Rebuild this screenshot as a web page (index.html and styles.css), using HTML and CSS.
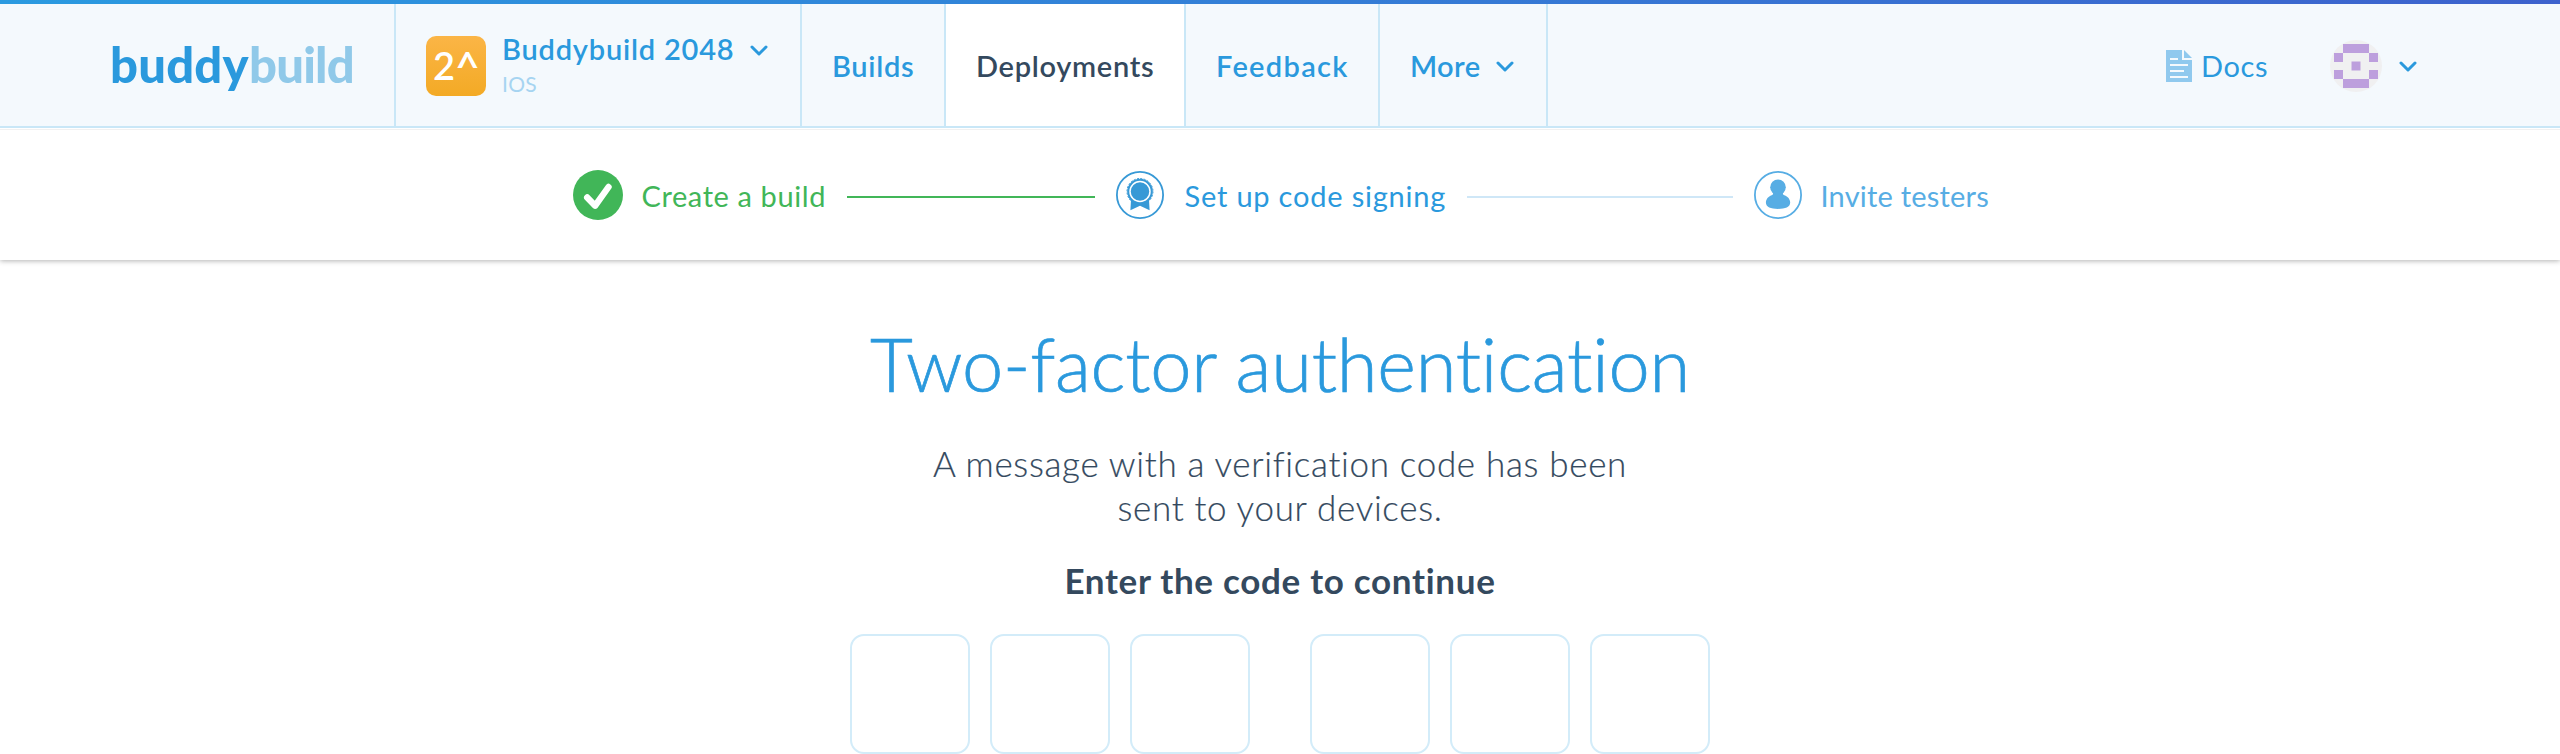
FILE: index.html
```html
<!DOCTYPE html>
<html lang="en">
<head>
<meta charset="utf-8">
<title>buddybuild</title>
<link rel="stylesheet" href="styles.css">
</head>
<body>
<header class="header">
  <a class="logo"><span class="logo-strong">buddy</span><span class="logo-light">build</span></a>
  <div class="app">
    <div class="app-icon"><span class="app-two">2</span><span class="app-caret">^</span></div>
    <div class="app-text">
      <div class="app-name">Buddybuild 2048</div>
      <div class="app-platform">IOS</div>
    </div>
    <svg class="chevron app-chevron" viewBox="0 0 18 12"><path d="M2 2l7 7 7-7"/></svg>
  </div>
  <nav class="nav">
    <a class="nav-item nav-builds">Builds</a>
    <a class="nav-item nav-deployments active">Deployments</a>
    <a class="nav-item nav-feedback">Feedback</a>
    <a class="nav-item nav-more">More<svg class="chevron more-chevron" viewBox="0 0 18 12"><path d="M2 2l7 7 7-7"/></svg></a>
  </nav>
  <div class="account">
    <svg class="docs-icon" viewBox="0 0 26 32"><path fill="#90c9ee" fill-rule="evenodd" d="M0 0h16v10h10v22H0zM4 8v2h8V8zm0 6v2h18v-2zm0 6v2h14v-2zm0 6v2h18v-2z"/><path fill="#90c9ee" d="M18 0l8 8h-8z"/></svg>
    <a class="docs">Docs</a>
    <svg class="avatar" viewBox="0 0 52 52"><circle cx="26" cy="26" r="26" fill="#f0f0f1"/><path fill="#bd9fdd" d="M13 4h26v9H13zM4 13h9v9H4zM39 13h9v9h-9zM21.5 21.5h9v9h-9zM4 30h9v9H4zM39 30h9v9h-9zM13 39h26v9H13z"/></svg>
    <svg class="chevron account-chevron" viewBox="0 0 18 12"><path d="M2 2l7 7 7-7"/></svg>
  </div>
</header>

<section class="steps">
  <svg class="step-icon step-done" viewBox="0 0 50 50"><circle cx="25" cy="25" r="25" fill="#41b658"/><path d="M14.2 27.5l8 8.2L35.5 17" fill="none" stroke="#fff" stroke-width="6.4" stroke-linecap="round" stroke-linejoin="round"/></svg>
  <span class="step-label label-create">Create a build</span>
  <span class="step-line line-done"></span>
  <svg class="step-icon" viewBox="0 0 48 48"><circle cx="24" cy="24" r="23.1" fill="#fff" stroke="#3799d6" stroke-width="1.8"/><path d="M15 29l-.6 10.200 9.600-4.400 9.600 4.400L33 29z" fill="#3799d6"/><circle cx="24" cy="20.500" r="12.800" fill="#3799d6"/><circle cx="24" cy="20.500" r="13" fill="none" stroke="#3799d6" stroke-width="1" stroke-dasharray="2 1.400"/><circle cx="24" cy="20.500" r="10" fill="none" stroke="#fff" stroke-width="1.500"/></svg>
  <span class="step-label label-signing">Set up code signing</span>
  <span class="step-line line-next"></span>
  <svg class="step-icon" viewBox="0 0 48 48"><g fill="#57ade4"><circle cx="24" cy="24" r="23.1" fill="#fff" stroke="#57ade4" stroke-width="1.8"/><circle cx="24" cy="16.300" r="7.800"/><path d="M18.500 20.500c1 2 .8 2.900-.9 3.700-3.300 1.200-5.700 4-5.700 7.400 0 4.600 4.800 6.300 12.100 6.300s12.200-1.700 12.200-6.300c0-3.400-2.400-6.200-5.800-7.400-1.700-.8-1.900-1.700-.9-3.700z"/></g></svg>
  <span class="step-label label-invite">Invite testers</span>
</section>

<main class="main">
  <h1 class="title">Two-factor authentication</h1>
  <p class="message">A message with a verification code has been<br>sent to your devices.</p>
  <p class="prompt">Enter the code to continue</p>
  <form class="code">
    <div class="code-group"><input class="digit" aria-label="Digit 1"><input class="digit" aria-label="Digit 2"><input class="digit" aria-label="Digit 3"></div>
    <div class="code-group"><input class="digit" aria-label="Digit 4"><input class="digit" aria-label="Digit 5"><input class="digit" aria-label="Digit 6"></div>
  </form>
</main>
</body>
</html>
```

FILE: styles.css
```css
* { box-sizing: border-box; }
body {
  margin: 0;
  background: #fff;
  font-family: Lato, "Liberation Sans", sans-serif;
  font-size: 29px;
  color: #34495e;
}
svg { display: block; flex: none; }

.header {
  display: flex;
  height: 128px;
  padding-top: 4px;
  background: linear-gradient(90deg, #2a9ae0, #3d62cd) top / 100% 4px no-repeat #f4f9fd;
  border-bottom: 2px solid #c9e7f7;
}
.logo {
  display: flex;
  align-items: center;
  width: 394px;
  padding: 0 0 3px 110px;
  font-size: 49px;
  font-weight: 900;
}
.logo-strong { width: 139px; color: #2a99dd; letter-spacing: 0.2px; }
.logo-light { color: #90c9e9; letter-spacing: -0.8px; }

.app {
  display: flex;
  width: 408px;
  padding: 32px 0 0 30px;
  border-left: 2px solid #c9e7f7;
  border-right: 2px solid #c9e7f7;
}
.app-icon {
  display: flex;
  width: 60px;
  height: 60px;
  padding-left: 7px;
  border-radius: 10px;
  background: linear-gradient(#fbb546, #f3aa25);
  color: #fff;
  font-size: 38px;
  font-weight: 600;
  line-height: 58px;
}
.app-caret { font-size: 43px; line-height: 62px; }
.app-text { width: 235px; margin: -5px 0 0 16px; color: #2a99dd; }
.app-name { font-weight: 600; line-height: 36px; letter-spacing: 0.8px; white-space: nowrap; }
.app-platform {
  margin: 5px 0 0;
  color: #a6d4f1;
  font-size: 21px;
  line-height: 24px;
  letter-spacing: 0.3px;
}
.chevron { width: 18px; height: 12px; fill: none; stroke: #2a99dd; stroke-width: 3; stroke-linecap: round; stroke-linejoin: round; }
.app-chevron { margin: 9px 0 0 13px; }

.nav { display: flex; }
.nav-item {
  display: flex;
  align-items: center;
  padding-left: 30px;
  border-right: 2px solid #c9e7f7;
  color: #2a99dd;
  font-weight: 600;
}
.nav-builds { width: 144px; letter-spacing: 0.7px; }
.nav-deployments { width: 240px; letter-spacing: 0.7px; }
.nav-feedback { width: 194px; letter-spacing: 1.3px; }
.nav-more { width: 168px; letter-spacing: 0.4px; }
.active { background: #fff; color: #34495e; }
.more-chevron { margin: 3px 0 0 16px; }

.account { display: flex; align-items: center; margin-left: auto; padding-right: 143px; }
.docs-icon { width: 26px; height: 32px; margin-top: 2px; }
.docs { width: 69px; margin-left: 9px; color: #2a99dd; letter-spacing: 0.6px; }
.avatar { width: 52px; height: 52px; margin: 2px 17px 0 60px; }
.account-chevron { margin-top: 3px; }

.steps {
  display: flex;
  align-items: center;
  justify-content: center;
  height: 132px;
  padding-top: 2px;
  background: linear-gradient(#fff 1px, #f1f1f1 1px, #f1f1f1 2px, #fff 2px);
  box-shadow: 0 1px 5px rgba(0, 0, 0, 0.3);
  clip-path: inset(0 0 -10px 0);
}
.step-icon { width: 48px; height: 48px; }
.step-done { width: 50px; height: 50px; }
.step-label { white-space: nowrap; }
.label-create { width: 186px; margin: 0 19px; color: #41b658; letter-spacing: 0.6px; }
.label-signing { width: 263px; margin: 0 19px 0 21px; color: #2a99dd; letter-spacing: 0.8px; }
.label-invite { width: 167px; margin-left: 19px; color: #57ade4; letter-spacing: 0.2px; }
.step-line { height: 2px; margin-top: 4px; }
.line-done { width: 248px; margin-right: 21px; background: #41b658; }
.line-next { width: 266px; margin-right: 21px; background: #cfe7f7; }

.main { padding-top: 59px; text-align: center; }
.title {
  margin: 0;
  color: #2a99dd;
  font-size: 74px;
  font-weight: 300;
  line-height: 90px;
  letter-spacing: -0.2px;
  -webkit-text-stroke: 0.7px #2a99dd;
}
.message { margin: 32px 0 0; font-size: 35px; font-weight: 300; line-height: 44px; letter-spacing: 0.68px; -webkit-text-stroke: 0.2px #34495e; }
.prompt { margin: 29px 0 0; font-size: 35px; font-weight: 700; line-height: 44px; letter-spacing: 0.7px; }
.code { display: flex; justify-content: center; gap: 60px; margin-top: 32px; }
.code-group { display: flex; gap: 20px; }
.digit {
  width: 120px;
  height: 120px;
  padding: 0;
  border: 2px solid #d3ecf9;
  border-radius: 14px;
  background: #fff;
  font: inherit;
  text-align: center;
}
```
